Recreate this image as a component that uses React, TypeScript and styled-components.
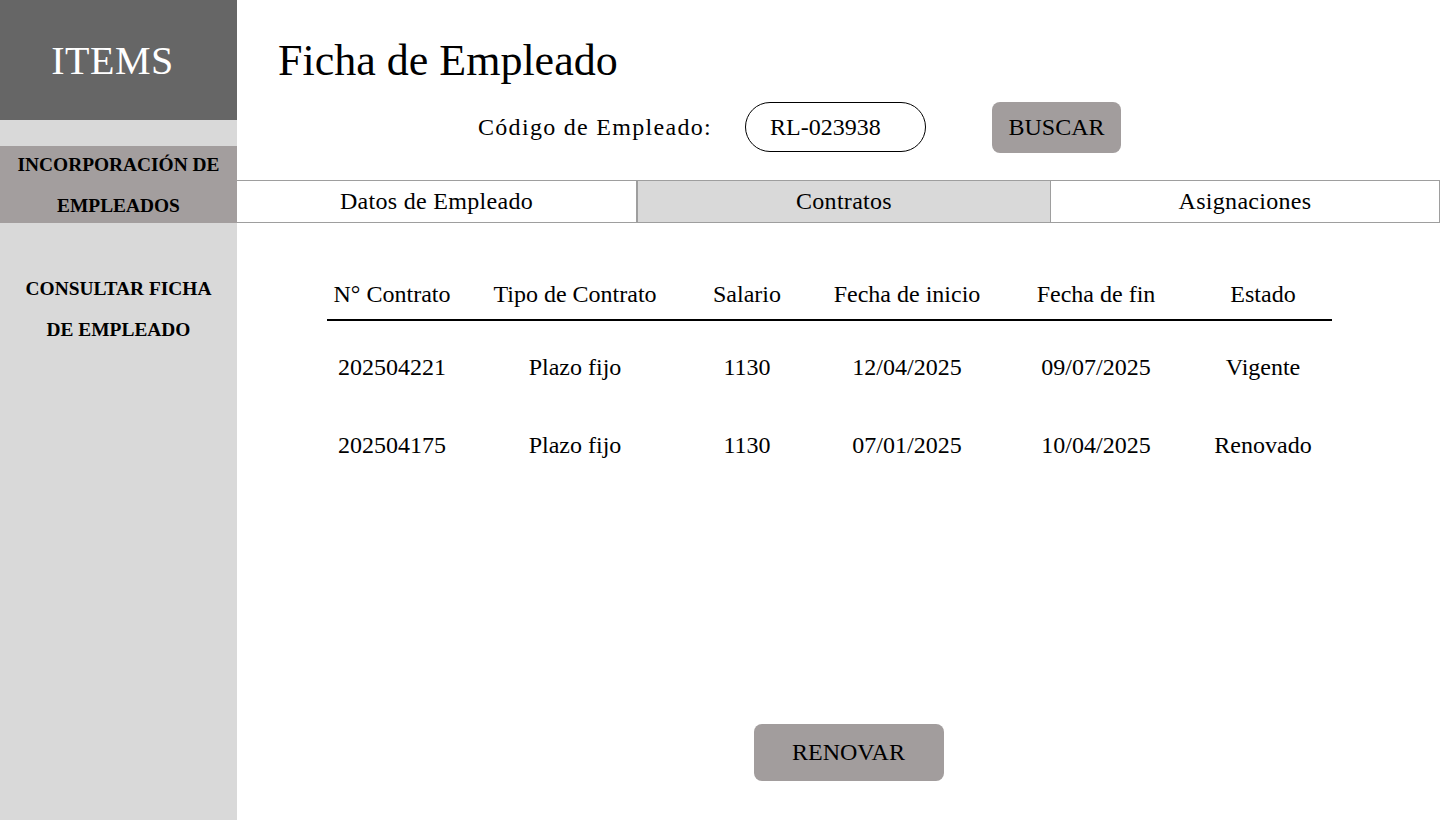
import styled, { createGlobalStyle } from "styled-components";

const GlobalStyle = createGlobalStyle`
	html, body {
		margin: 0;
		padding: 0;
		background: #ffffff;
		font-family: "Liberation Serif", "DejaVu Serif", serif;
		color: #000000;
	}
	* {
		box-sizing: border-box;
	}
`;

const Page = styled.div`
	display: flex;
	width: 1440px;
	height: 820px;
	overflow: hidden;
`;

const Sidebar = styled.aside`
	display: flex;
	flex-direction: column;
	width: 237px;
	flex-shrink: 0;
	background: #d9d9d9;
`;

const Brand = styled.div`
	display: flex;
	align-items: center;
	justify-content: center;
	height: 120px;
	padding-right: 12px;
	background: #666666;
	color: #ffffff;
	font-size: 40px;
	letter-spacing: 0.5px;
`;

const NavItem = styled.div<{ active?: boolean }>`
	display: flex;
	align-items: center;
	justify-content: center;
	height: 77px;
	margin-top: ${(p) => (p.active ? "26px" : "47px")};
	background: ${(p) => (p.active ? "#a39e9e" : "transparent")};
	text-align: center;
	font-size: 19.4px;
	font-weight: 700;
	line-height: 41px;
`;

const Main = styled.main`
	display: flex;
	flex-direction: column;
	flex: 1;
`;

const Title = styled.h1`
	margin: 0;
	padding: 40px 0 0 41px;
	font-size: 44px;
	font-weight: 400;
	line-height: 42px;
`;

const SearchRow = styled.div`
	display: flex;
	align-items: center;
	height: 50px;
	margin-top: 20px;
	padding-left: 241px;
`;

const Label = styled.span`
	width: 267px;
	font-size: 24px;
	letter-spacing: 1.3px;
`;

const CodeInput = styled.div`
	display: flex;
	align-items: center;
	width: 181px;
	height: 50px;
	padding-left: 24px;
	border: 1px solid #000000;
	border-radius: 25px;
	font-size: 24px;
`;

const Button = styled.button<{ wide?: boolean }>`
	width: ${(p) => (p.wide ? "190px" : "129px")};
	height: ${(p) => (p.wide ? "57px" : "51px")};
	border: none;
	border-radius: 8px;
	background: #a29d9d;
	color: #000000;
	font-family: inherit;
	font-size: 24px;
	cursor: pointer;
`;

const SearchButton = styled(Button)`
	margin-left: 66px;
`;

const Tabs = styled.div`
	display: grid;
	grid-template-columns: 400px 414px 1fr;
	height: 43px;
	margin-top: 28px;
	border-top: 1px solid #9e9e9e;
	border-bottom: 1px solid #9e9e9e;
`;

const Tab = styled.div<{ active?: boolean }>`
	display: flex;
	align-items: center;
	justify-content: center;
	border-left: ${(p) => (p.active ? "1px solid #9e9e9e" : "none")};
	border-right: 1px solid #9e9e9e;
	background: ${(p) => (p.active ? "#d9d9d9" : "#ffffff")};
	font-size: 24px;
	letter-spacing: 0.3px;
`;

const Table = styled.div`
	width: 1005px;
	margin: 48px 0 0 90px;
`;

const Row = styled.div<{ head?: boolean }>`
	display: grid;
	grid-template-columns: 130px 236px 108px 212px 166px 168px;
	align-items: center;
	height: ${(p) => (p.head ? "50px" : "78px")};
	border-bottom: ${(p) => (p.head ? "2px solid #000000" : "none")};
	margin-bottom: ${(p) => (p.head ? "7px" : "0")};
	padding-bottom: ${(p) => (p.head ? "2px" : "0")};
`;

const Cell = styled.div`
	text-align: center;
	font-size: 24px;
	white-space: nowrap;
`;

const Footer = styled.div`
	display: flex;
	justify-content: center;
	margin-top: auto;
	margin-bottom: 39px;
	padding-left: 20px;
`;

const headers = [
	"N° Contrato",
	"Tipo de Contrato",
	"Salario",
	"Fecha de inicio",
	"Fecha de fin",
	"Estado",
];

const contratos = [
	["202504221", "Plazo fijo", "1130", "12/04/2025", "09/07/2025", "Vigente"],
	["202504175", "Plazo fijo", "1130", "07/01/2025", "10/04/2025", "Renovado"],
];

export default function App() {
	return (
		<>
			<GlobalStyle />
			<Page>
				<Sidebar>
					<Brand>ITEMS</Brand>
					<NavItem active>
						INCORPORACIÓN DE
						<br />
						EMPLEADOS
					</NavItem>
					<NavItem>
						CONSULTAR FICHA
						<br />
						DE EMPLEADO
					</NavItem>
				</Sidebar>
				<Main>
					<Title>Ficha de Empleado</Title>
					<SearchRow>
						<Label>Código de Empleado:</Label>
						<CodeInput>RL-023938</CodeInput>
						<SearchButton>BUSCAR</SearchButton>
					</SearchRow>
					<Tabs>
						<Tab>Datos de Empleado</Tab>
						<Tab active>Contratos</Tab>
						<Tab>Asignaciones</Tab>
					</Tabs>
					<Table>
						<Row head>
							{headers.map((h) => (
								<Cell key={h}>{h}</Cell>
							))}
						</Row>
						{contratos.map((c) => (
							<Row key={c[0]}>
								{c.map((v, i) => (
									<Cell key={i}>{v}</Cell>
								))}
							</Row>
						))}
					</Table>
					<Footer>
						<Button wide>RENOVAR</Button>
					</Footer>
				</Main>
			</Page>
		</>
	);
}
